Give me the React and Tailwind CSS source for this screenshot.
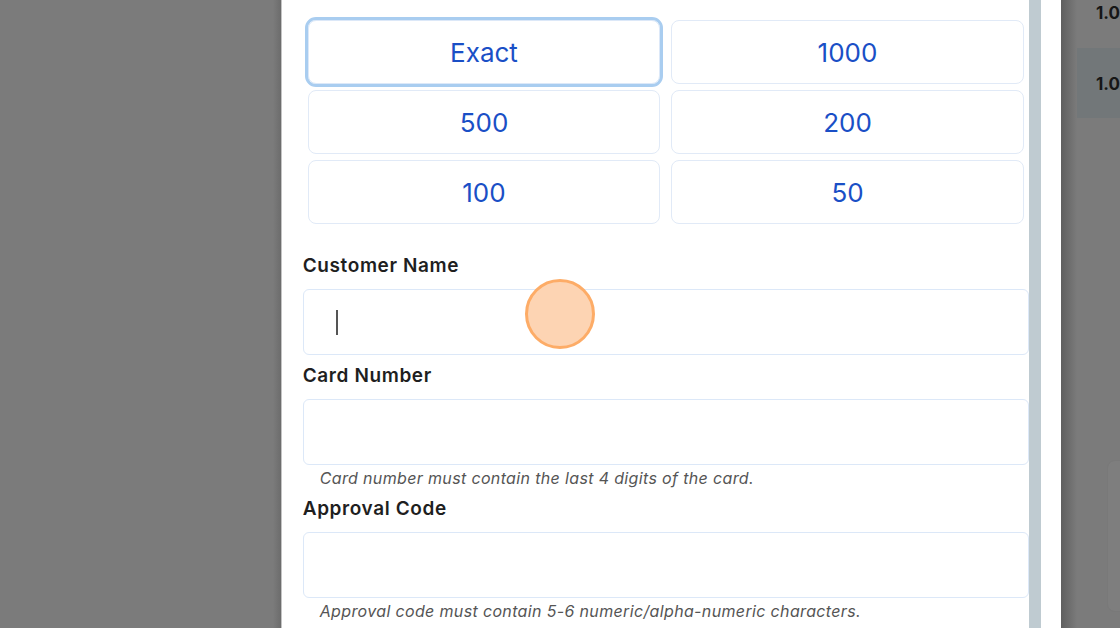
import React from "react";

const amounts = ["Exact", "1000", "500", "200", "100", "50"];

function Field({ label, help, caret }) {
  return (
    <div className="flex flex-col">
      <label className="block h-[24px] leading-[24px] text-[19px] tracking-[0.6px] font-semibold text-[#1f1f1f] mb-[11px]">
        {label}
      </label>
      <div className="h-[66px] w-full rounded-[6px] border border-[#dce8f8] bg-white flex items-center pl-[32px]">
        {caret && <span className="block w-[2px] h-[25px] bg-[#555]" />}
      </div>
      {help && (
        <p className="mt-[3px] h-[20px] leading-[20px] pl-[17px] text-[16px] tracking-[0.35px] italic text-[#555]">
          {help}
        </p>
      )}
    </div>
  );
}

export default function App() {
  return (
    <div
      className="relative w-[1120px] h-[628px] overflow-hidden flex bg-[#7b7b7b]"
      style={{ fontFamily: "Inter, 'Open Sans', sans-serif" }}
    >
      {/* overlay left */}
      <div className="w-[281px] h-full flex justify-end">
        <div className="w-[8px] h-full bg-gradient-to-r from-[#7b7b7b] to-[#6c6c6c]" />
      </div>

      {/* modal */}
      <div className="w-[781px] h-full bg-white flex border-l border-[#c4c4c4]">
        <div className="w-[747px] h-full pl-[21px] overflow-hidden">
          <div className="-mt-[22px] flex flex-col">
            <label className="block h-[24px] leading-[24px] text-[19px] tracking-[0.6px] font-semibold text-[#1f1f1f] mb-[18px]">
              Amount Paid by Customer
            </label>
            <div className="grid grid-cols-2 gap-x-[11px] gap-y-[6px] pl-[5px] pr-[5px]">
              {amounts.map((a, i) => (
                <button
                  key={a}
                  className={`h-[64px] rounded-[8px] bg-white text-[26px] text-[#1a4fc6] ${
                    i === 0
                      ? "border border-[#dce8f8] outline-[3px] outline-solid outline-[#a9cdf0]"
                      : "border border-[#e1eaf7]"
                  }`}
                >
                  {a}
                </button>
              ))}
            </div>
            <div className="mt-[30px] flex flex-col gap-[9px]">
              <Field label="Customer Name" caret />
              <Field
                label="Card Number"
                help="Card number must contain the last 4 digits of the card."
              />
              <Field
                label="Approval Code"
                help="Approval code must contain 5-6 numeric/alpha-numeric characters."
              />
            </div>
          </div>
        </div>
        <div className="w-[12px] h-full bg-[#bfcbd1]" />
        <div className="flex-1" />
      </div>

      {/* right page behind overlay */}
      <div className="relative flex-1 h-full bg-[#7b7b7b]">
        <div className="absolute left-0 top-0 w-[16px] h-full bg-gradient-to-r from-[#5f5f5f] to-[#7b7b7b]" />
        <div className="relative pl-[35px] pt-[2px] text-[17px] font-bold text-[#161616] leading-[22px]">
          1.0
        </div>
        <div className="relative mt-[24px] ml-[16px] h-[70px] bg-[#727779] pl-[19px] pt-[25px] text-[17px] font-bold text-[#161616] leading-[22px]">
          1.0
        </div>
        <div className="absolute left-[46px] top-[460px] w-[40px] h-[152px] rounded-[8px] bg-[#7e7e7e] border border-[#797979]" />
      </div>

      {/* click indicator */}
      <div className="absolute left-[525px] top-[279px] w-[70px] h-[70px] rounded-full bg-[#fdd4b3] border-[3px] border-[#fdac67]" />
    </div>
  );
}
